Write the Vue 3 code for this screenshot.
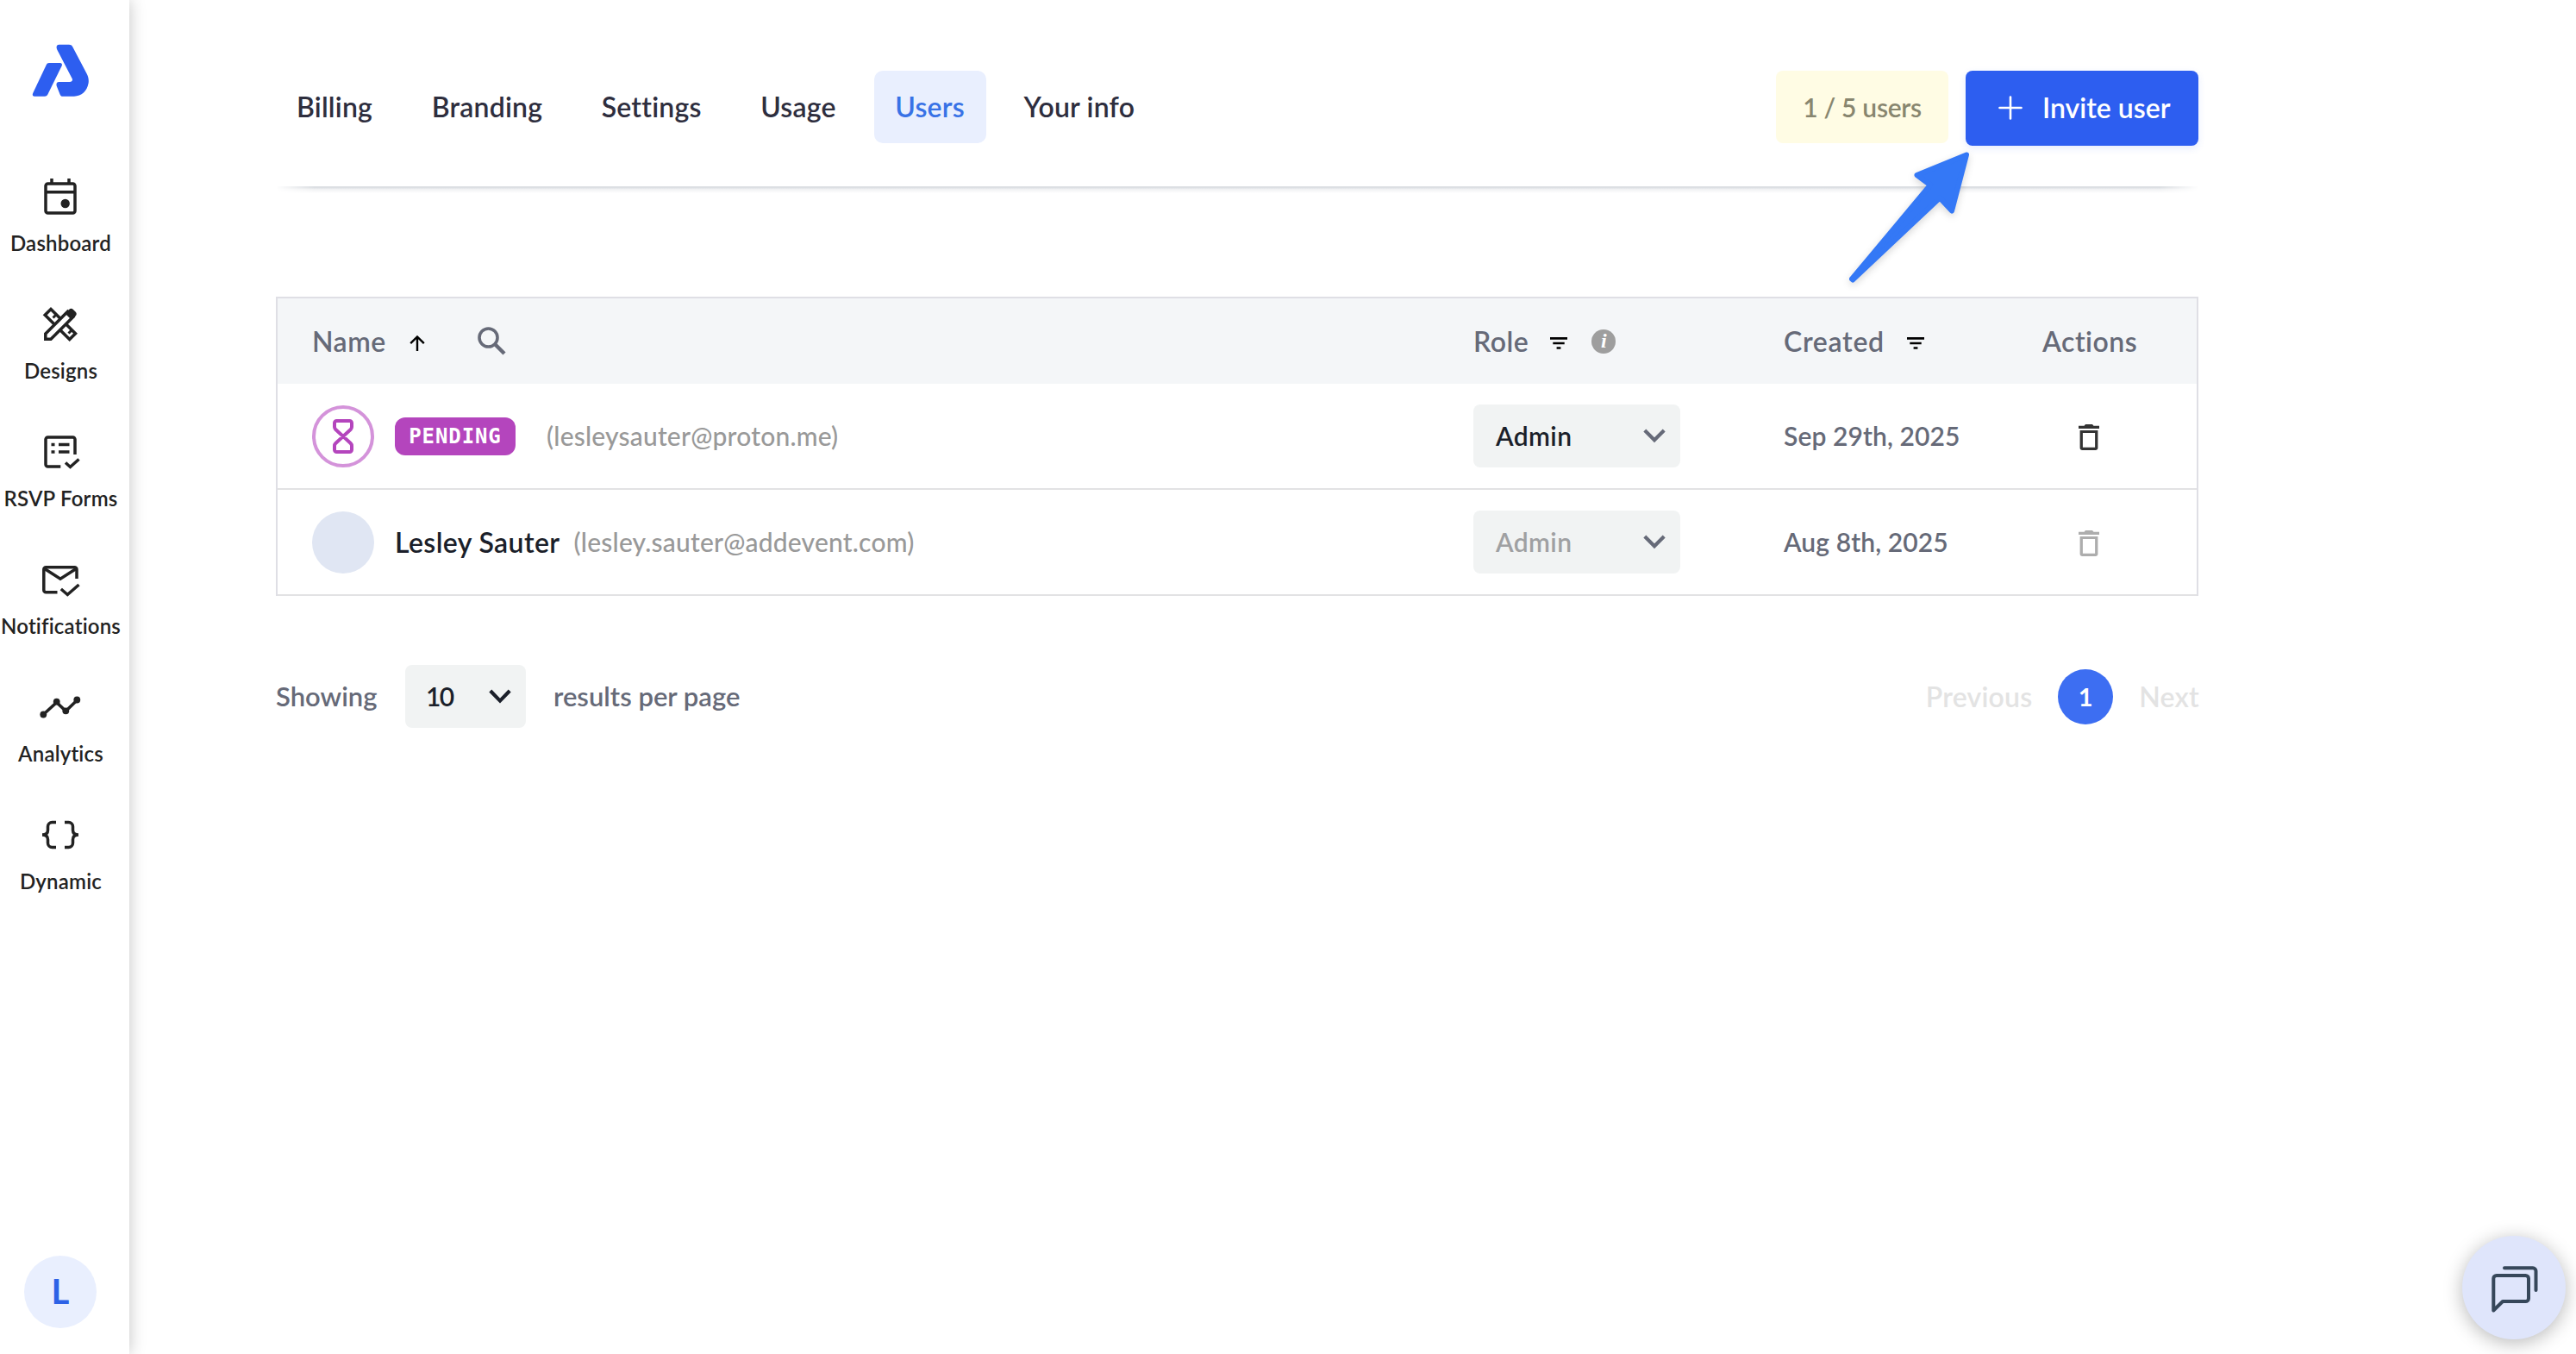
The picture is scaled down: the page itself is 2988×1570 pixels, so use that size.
<template>
  <div class="app-shell">
    <aside class="sidebar">
      <svg class="logo" viewBox="0 0 66 62" width="66" height="62" fill="#2d5ef0">
        <path d="M20 22H32.5C34.6 22 35.6 23.4 34.6 25.6L18.6 58C17.7 59.8 16.8 60.7 14.8 60.7H3.2C1 60.7 .2 59.2 1.2 57L16.6 24.4C17.5 22.7 18.2 22 20 22Z"/>
        <path d="M31.6 .7H43C45 .7 46.2 1.4 47.2 3.2L63.4 34C65.6 38.2 66.2 41.6 65.6 45.6C64 54.6 57.6 60.7 49 60.7H35.8C34.2 60.7 33.2 60 32.6 58.4L28.8 49C27.9 46.2 28.8 44 31.4 44H43.8C46.4 44 47.7 42.4 46.6 40L29.2 6.4C27.8 3.2 28.8 .7 31.6 .7Z"/>
      </svg>
      <nav class="side-nav">
        <a v-for="item in sideItems" :key="item.label" class="side-item">
          <svg class="side-icon" viewBox="0 0 50 50" width="50" height="50" fill="none" stroke="currentColor" stroke-width="3.5" v-html="item.icon"></svg>
          <span>{{ item.label }}</span>
        </a>
      </nav>
      <div class="profile">L</div>
    </aside>

    <main class="content">
      <header class="topbar">
        <nav class="tabs">
          <button
            v-for="tab in tabs"
            :key="tab"
            class="tab"
            :class="{ active: activeTab === tab }"
            @click="activeTab = tab"
          >
            {{ tab }}
          </button>
        </nav>
        <div class="topbar-actions">
          <span class="quota">1 / 5 users</span>
          <button class="invite">
            <svg viewBox="0 0 28 28" width="28" height="28" fill="none" stroke="currentColor" stroke-width="2.6" stroke-linecap="round"><path d="M14 1.5v25M1.5 14h25"/></svg>
            <span>Invite user</span>
          </button>
        </div>
        <svg class="pointer" viewBox="0 0 180 180" width="180" height="180" fill="#3478f6" stroke="#3478f6" stroke-width="6" stroke-linejoin="round">
          <path d="M161 15.500L103.500 39L119 50.500L28 159.500L29 160.500L130 65.500L144 80.500Z"/>
        </svg>
      </header>
      <div class="divider"></div>

      <section class="table">
        <div class="row head">
          <div class="cell">
            <span>Name</span>
            <svg class="sort" viewBox="0 0 18 18" width="18" height="18" fill="none" stroke="#000" stroke-width="2.4"><path d="M9 18V2M1.200 9.200L9 1.500l7.800 7.700"/></svg>
            <svg class="search" viewBox="0 0 33 33" width="33" height="33" fill="none" stroke="#666a78"><circle cx="12.500" cy="12.500" r="10.500" stroke-width="3.600"/><path d="M20.500 20.500l10.500 10.500" stroke-width="4.400"/></svg>
          </div>
          <div class="cell">
            <span>Role</span>
            <svg class="filter" viewBox="0 0 20 14" width="20" height="14"><path d="M0 0h20v2.700H0zM3.300 5.700h13.400v2.600H3.300zM7.600 11.300h4.800v2.400H7.600z"/></svg>
            <span class="info">i</span>
          </div>
          <div class="cell created">
            <span>Created</span>
            <svg class="filter" viewBox="0 0 20 14" width="20" height="14"><path d="M0 0h20v2.700H0zM3.300 5.700h13.400v2.600H3.300zM7.600 11.300h4.800v2.400H7.600z"/></svg>
          </div>
          <div class="cell">Actions</div>
        </div>

        <div v-for="user in users" :key="user.email" class="row">
          <div class="cell">
            <span class="avatar" :class="{ pending: user.pending }">
              <svg v-if="user.pending" viewBox="0 0 24 40" width="24" height="40" fill="none" stroke="#b445bd" stroke-width="4" stroke-linejoin="round"><path d="M4.500 2h15a2.500 2.500 0 0 1 2.500 2.500V9c0 1.300-.4 2.100-1.300 3L12 20l-8.700-8C2.400 11.100 2 10.300 2 9V4.500A2.500 2.500 0 0 1 4.500 2zM4.500 38h15a2.500 2.500 0 0 0 2.500-2.500V31c0-1.300-.4-2.100-1.300-3L12 20l-8.700 8C2.400 28.900 2 29.700 2 31v4.500A2.500 2.500 0 0 0 4.500 38z"/></svg>
            </span>
            <span v-if="user.pending" class="badge">PENDING</span>
            <span v-else class="name">{{ user.name }}</span>
            <span class="email">({{ user.email }})</span>
          </div>
          <div class="cell">
            <div class="select" :class="{ disabled: !user.pending }">
              <span>{{ user.role }}</span>
              <svg viewBox="0 0 26 17" width="26" height="17" fill="none" stroke="#666a78" stroke-width="4.200"><path d="M1.800 2L13 13.200 24.200 2"/></svg>
            </div>
          </div>
          <div class="cell date">{{ user.created }}</div>
          <div class="cell">
            <svg class="trash" :class="{ disabled: !user.pending }" viewBox="0 0 24 30" width="24" height="30" fill="currentColor"><path d="M0 1.800h6.500L8 0h8l1.500 1.800H24V5H0zM1.600 7h20.800v20.200c0 1.700-1.100 2.800-2.800 2.800H4.400c-1.700 0-2.800-1.100-2.800-2.800zM4.900 10v16.800h14.200V10z" fill-rule="evenodd"/></svg>
          </div>
        </div>
      </section>

      <footer class="pager">
        <div class="page-size">
          <span class="showing">Showing</span>
          <div class="select small">
            <span>10</span>
            <svg viewBox="0 0 26 17" width="26" height="17" fill="none" stroke="#1b1f2a" stroke-width="4.200"><path d="M1.800 2L13 13.600 24.200 2"/></svg>
          </div>
          <span>results per page</span>
        </div>
        <div class="pages">
          <span>Previous</span>
          <span class="current">1</span>
          <span>Next</span>
        </div>
      </footer>
    </main>

    <button class="chat">
      <svg viewBox="0 0 60 62" width="60" height="62" fill="none" stroke="#36475a" stroke-width="4" stroke-linecap="round" stroke-linejoin="round"><path d="M6.300 57.500V20.500a3.500 3.500 0 0 1 3.500-3.500H43.500a3.500 3.500 0 0 1 3.500 3.500v23a3.500 3.500 0 0 1-3.500 3.500H17z"/><path d="M19 8.300H52a3.500 3.500 0 0 1 3.500 3.500V34"/></svg>
    </button>
  </div>
</template>

<script setup>
import { ref } from 'vue'

const sideItems = [
  {
    label: 'Dashboard',
    icon: '<rect x="8" y="10" width="34" height="34" rx="2.500"/><path d="M8 19.700h34M15 4v6M35 4v6"/><circle cx="30.700" cy="33" r="5.200" fill="currentColor" stroke="none"/>'
  },
  {
    label: 'Designs',
    icon: '<path d="M14 7.500L7.200 14.300 35.700 42.500 42.500 35.700Z"/><path d="M21 13l-4.500 4.500M39 31l-4.500 4.500" stroke-width="3"/><path d="M7.800 42.200V36L33.500 10.300l6.300 6.300L14 42.200Z" fill="#fff"/><path d="M30.500 12.500l4.500-4.500q2.500-2.500 5 0l2.500 2.500q2.500 2.500 0 5l-4.500 4.500z" fill="currentColor" stroke="none"/>'
  },
  {
    label: 'RSVP Forms',
    icon: '<path d="M25.300 42H10.500a2.500 2.500 0 0 1-2.500-2.500v-29A2.500 2.500 0 0 1 10.500 8h29a2.500 2.500 0 0 1 2.500 2.500V28"/><path d="M23 16.500h12.500M23 25h12.500M14.500 16.500h4M14.500 25h4"/><path d="M31 37.500l5.500 5L46.500 33.500"/>'
  },
  {
    label: 'Notifications',
    icon: '<path d="M21.500 39.800H8.300a2.500 2.500 0 0 1-2.500-2.500V13.300a2.500 2.500 0 0 1 2.500-2.500H41.500a2.500 2.500 0 0 1 2.500 2.500V24"/><path d="M6 12l19 12.200L44 12"/><path d="M25.800 36l7.500 6.500L46.500 31"/>'
  },
  {
    label: 'Analytics',
    icon: '<path d="M5.300 33.500L20.700 19.500 31.300 29.500 44.300 17"/><g fill="currentColor" stroke="none"><circle cx="5.300" cy="33.500" r="3.900"/><circle cx="20.700" cy="18.700" r="3.900"/><circle cx="31.300" cy="29.300" r="3.900"/><circle cx="44.300" cy="16.500" r="3.900"/></g>'
  },
  {
    label: 'Dynamic',
    icon: '<path d="M20 10.500h-4.500a5 5 0 0 0-5 5v4c0 3.500-2 5.500-6.500 5.500 4.500 0 6.500 2 6.500 5.500v4a5 5 0 0 0 5 5H20M30 10.500h4.500a5 5 0 0 1 5 5v4c0 3.500 2 5.500 6.500 5.500-4.500 0-6.500 2-6.500 5.500v4a5 5 0 0 1-5 5H30"/>'
  }
]

const tabs = ['Billing', 'Branding', 'Settings', 'Usage', 'Users', 'Your info']
const activeTab = ref('Users')

const users = [
  { name: '', email: 'lesleysauter@proton.me', role: 'Admin', created: 'Sep 29th, 2025', pending: true },
  { name: 'Lesley Sauter', email: 'lesley.sauter@addevent.com', role: 'Admin', created: 'Aug 8th, 2025', pending: false }
]
</script>

<style>
body {
  background: #fff;
}
</style>

<style scoped>
.app-shell {
  --ink: #1b1f2a;
  --gray: #666a78;
  --muted: #999;
  --field: #f1f3f3;
  --blue: #2d5ef0;

  display: flex;
  height: 1570px;
  font-family: Lato, sans-serif;
  font-weight: 600;
  color: var(--gray);
  overflow: hidden;
}

.app-shell * {
  box-sizing: border-box;
}

button {
  border: none;
  background: none;
  padding: 0;
  font: inherit;
  letter-spacing: inherit;
  cursor: pointer;
}

.sidebar {
  width: 150px;
  flex: none;
  display: flex;
  flex-direction: column;
  align-items: center;
  padding: 51px 10px 30px 0;
  background: #fff;
  box-shadow: 0 0 18px rgba(0, 0, 0, 0.24);
}

.side-nav {
  display: flex;
  flex-direction: column;
  width: 100%;
  margin-top: 90px;
}

.side-item {
  height: 148px;
  display: flex;
  flex-direction: column;
  align-items: center;
  gap: 14px;
  color: #222;
  font-size: 24px;
  line-height: 30px;
  letter-spacing: 0.2px;
  white-space: nowrap;
}

.side-item span {
  padding-left: 1px;
}

.profile {
  width: 84px;
  height: 84px;
  margin-top: auto;
  border-radius: 50%;
  background: #e9effe;
  color: #2d62e6;
  font-size: 40px;
  font-weight: 700;
  line-height: 82px;
  text-align: center;
}

.content {
  width: 2230px;
  margin-left: 170px;
}

.topbar {
  position: relative;
  display: flex;
  justify-content: space-between;
  height: 216px;
  padding-top: 82px;
}

.tabs {
  display: flex;
  gap: 19.6px;
}

.tab {
  height: 84px;
  padding: 0 25px 1px 24px;
  border-radius: 10px;
  color: #2e2e3e;
  font-size: 32px;
  letter-spacing: 0.2px;
}

.tab.active {
  background: #e9effe;
  color: #3872e6;
}

.topbar-actions {
  display: flex;
  align-items: flex-start;
  gap: 20px;
}

.quota {
  height: 84px;
  width: 200px;
  border-radius: 8px;
  background: #fffce4;
  color: #88866f;
  font-size: 30px;
  line-height: 84px;
  letter-spacing: -0.3px;
  text-align: center;
}

.invite {
  display: flex;
  align-items: center;
  gap: 23px;
  width: 270px;
  height: 87px;
  padding: 0 0 2px 38px;
  border-radius: 8px;
  background: var(--blue);
  box-shadow: 0 3px 8px rgba(45, 94, 240, 0.12);
  color: #fff;
  font-size: 32px;
}

.pointer {
  position: absolute;
  z-index: 1;
  left: 1800px;
  top: 164px;
  filter: drop-shadow(0 3px 4px rgba(0, 0, 0, 0.16));
}

.divider {
  height: 8px;
  background: linear-gradient(#dcdfe3 0, #dcdfe3 2px, #eff0f2 3px, #fff 8px);
  -webkit-mask-image: linear-gradient(90deg, transparent, #000 45px, #000 calc(100% - 45px), transparent);
  mask-image: linear-gradient(90deg, transparent, #000 45px, #000 calc(100% - 45px), transparent);
}

.table {
  margin-top: 120px;
  border: 2px solid #dfdfe5;
  border-bottom: none;
}

.row {
  display: grid;
  grid-template-columns: 1347px 360px 300px 1fr;
  height: 123px;
  padding: 1px 0 0 40px;
  border-bottom: 2px solid #e2e2e4;
}

.row.head {
  height: 99px;
  padding-top: 0;
  border-bottom: none;
  background: #f4f6f8;
  font-size: 32px;
  letter-spacing: 0.5px;
}

.cell {
  display: flex;
  align-items: center;
  white-space: nowrap;
}

.sort {
  margin: 5px 0 0 27px;
}

.search {
  margin-left: 61px;
}

.filter {
  margin: 5px 0 0 25px;
}

.created {
  letter-spacing: 0.7px;
}

.created .filter {
  margin-left: 26px;
}

.info {
  width: 28px;
  height: 28px;
  margin-left: 28px;
  border-radius: 50%;
  background: #9e9e9e;
  color: #fff;
  font: italic 700 24px/26px "Liberation Serif", serif;
  letter-spacing: 0;
  text-align: center;
}

.avatar {
  display: flex;
  align-items: center;
  justify-content: center;
  width: 72px;
  height: 72px;
  margin-right: 24px;
  border-radius: 50%;
  background: #e0e6f3;
}

.avatar.pending {
  border: 4px solid #d493da;
  background: #fff;
}

.badge {
  width: 140px;
  height: 44px;
  margin-right: 36px;
  border-radius: 12px;
  background: #b445bd;
  color: #fff;
  font: 700 24px/44px "DejaVu Sans Mono", monospace;
  letter-spacing: 0.9px;
  text-align: center;
}

.name {
  margin-right: 16px;
  padding-bottom: 2px;
  color: var(--ink);
  font-size: 32px;
  letter-spacing: 0.4px;
}

.email {
  padding-bottom: 2px;
  color: var(--muted);
  font-size: 30px;
  font-weight: 500;
  letter-spacing: 0.2px;
}

.select {
  display: flex;
  align-items: center;
  justify-content: space-between;
  width: 240px;
  height: 73px;
  margin-bottom: 1px;
  padding: 0 17px 0 26px;
  border-radius: 8px;
  background: var(--field);
  color: var(--ink);
  font-size: 30px;
  letter-spacing: 0.4px;
}

.select span {
  padding-bottom: 1px;
}

.select.disabled {
  color: #9fa0a2;
}

.date {
  padding-bottom: 2px;
  font-size: 30px;
  letter-spacing: 0.1px;
}

.trash {
  margin: 2px 0 0 42px;
  color: #333;
}

.trash.disabled {
  color: #adadad;
}

.pager {
  display: flex;
  align-items: center;
  justify-content: space-between;
  margin-top: 80px;
  font-size: 31px;
}

.page-size {
  display: flex;
  align-items: center;
}

.page-size > span {
  padding-bottom: 1px;
}

.showing {
  width: 150px;
}

.select.small {
  width: 140px;
  margin: 0 32px 0 0;
  padding-left: 24px;
  font-size: 30px;
  letter-spacing: -1.6px;
}

.pages {
  display: flex;
  align-items: center;
  gap: 30px;
  margin-right: -1px;
  color: #e3e3e3;
  font-size: 32px;
  letter-spacing: 0.2px;
}

.current {
  width: 64px;
  height: 64px;
  border-radius: 50%;
  background: #3d6ef2;
  color: #fff;
  font-size: 29px;
  font-weight: 700;
  line-height: 63px;
  text-align: center;
}

.chat {
  position: absolute;
  right: 12px;
  top: 1433px;
  display: flex;
  align-items: center;
  justify-content: center;
  width: 120px;
  height: 120px;
  border-radius: 50%;
  background: #dfe5fb;
  box-shadow: 0 4px 22px rgba(0, 0, 0, 0.28);
}
</style>
